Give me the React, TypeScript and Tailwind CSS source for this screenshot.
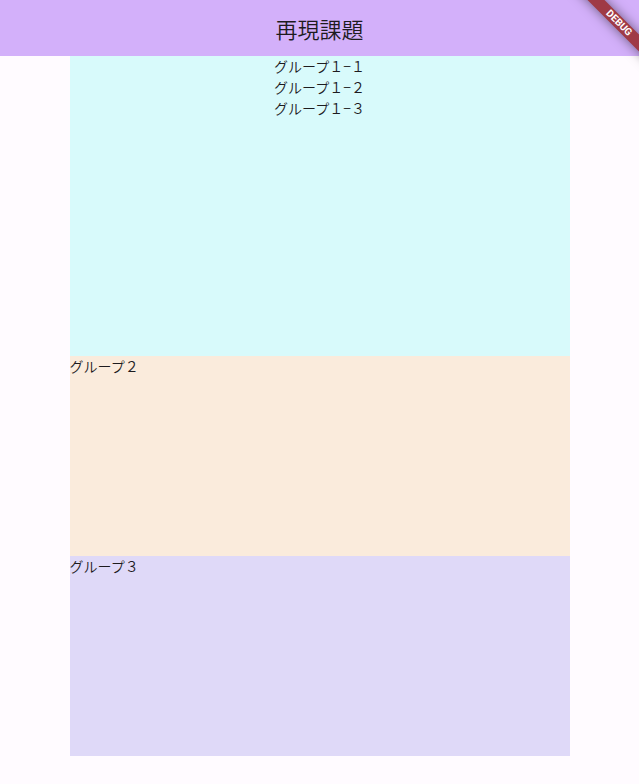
const groupOne = ['グループ１−１', 'グループ１−２', 'グループ１−３'];

export default function App() {
  return (
    <div className="relative min-h-screen overflow-hidden bg-[#fffbff] font-['Noto_Sans_CJK_JP',sans-serif] text-sm leading-[21px] font-[350] text-[#1d1b1e]">
      <header className="flex h-14 items-center justify-center bg-[#d3b0fa]">
        <h1 className="text-[22px] leading-7 font-[350]">再現課題</h1>
      </header>
      <main className="mx-auto w-full max-w-[500px]">
        <section className="h-[300px] bg-[#d8fafb] text-center">
          {groupOne.map((label) => (
            <p key={label}>{label}</p>
          ))}
        </section>
        <section className="h-[200px] bg-[#faebdc]">
          <p>グループ２</p>
        </section>
        <section className="h-[200px] bg-[#dfd9f8]">
          <p>グループ３</p>
        </section>
      </main>
      <div className="absolute top-0 right-0 size-20 overflow-hidden">
        <div className="absolute top-[17px] -right-10 h-3 w-[120px] rotate-45 bg-[#9f3a46] text-center font-['Roboto',sans-serif] text-[10px] leading-3 font-bold text-white shadow-[0_0_12px_rgba(0,0,0,0.5)]">
          DEBUG
        </div>
      </div>
    </div>
  );
}
